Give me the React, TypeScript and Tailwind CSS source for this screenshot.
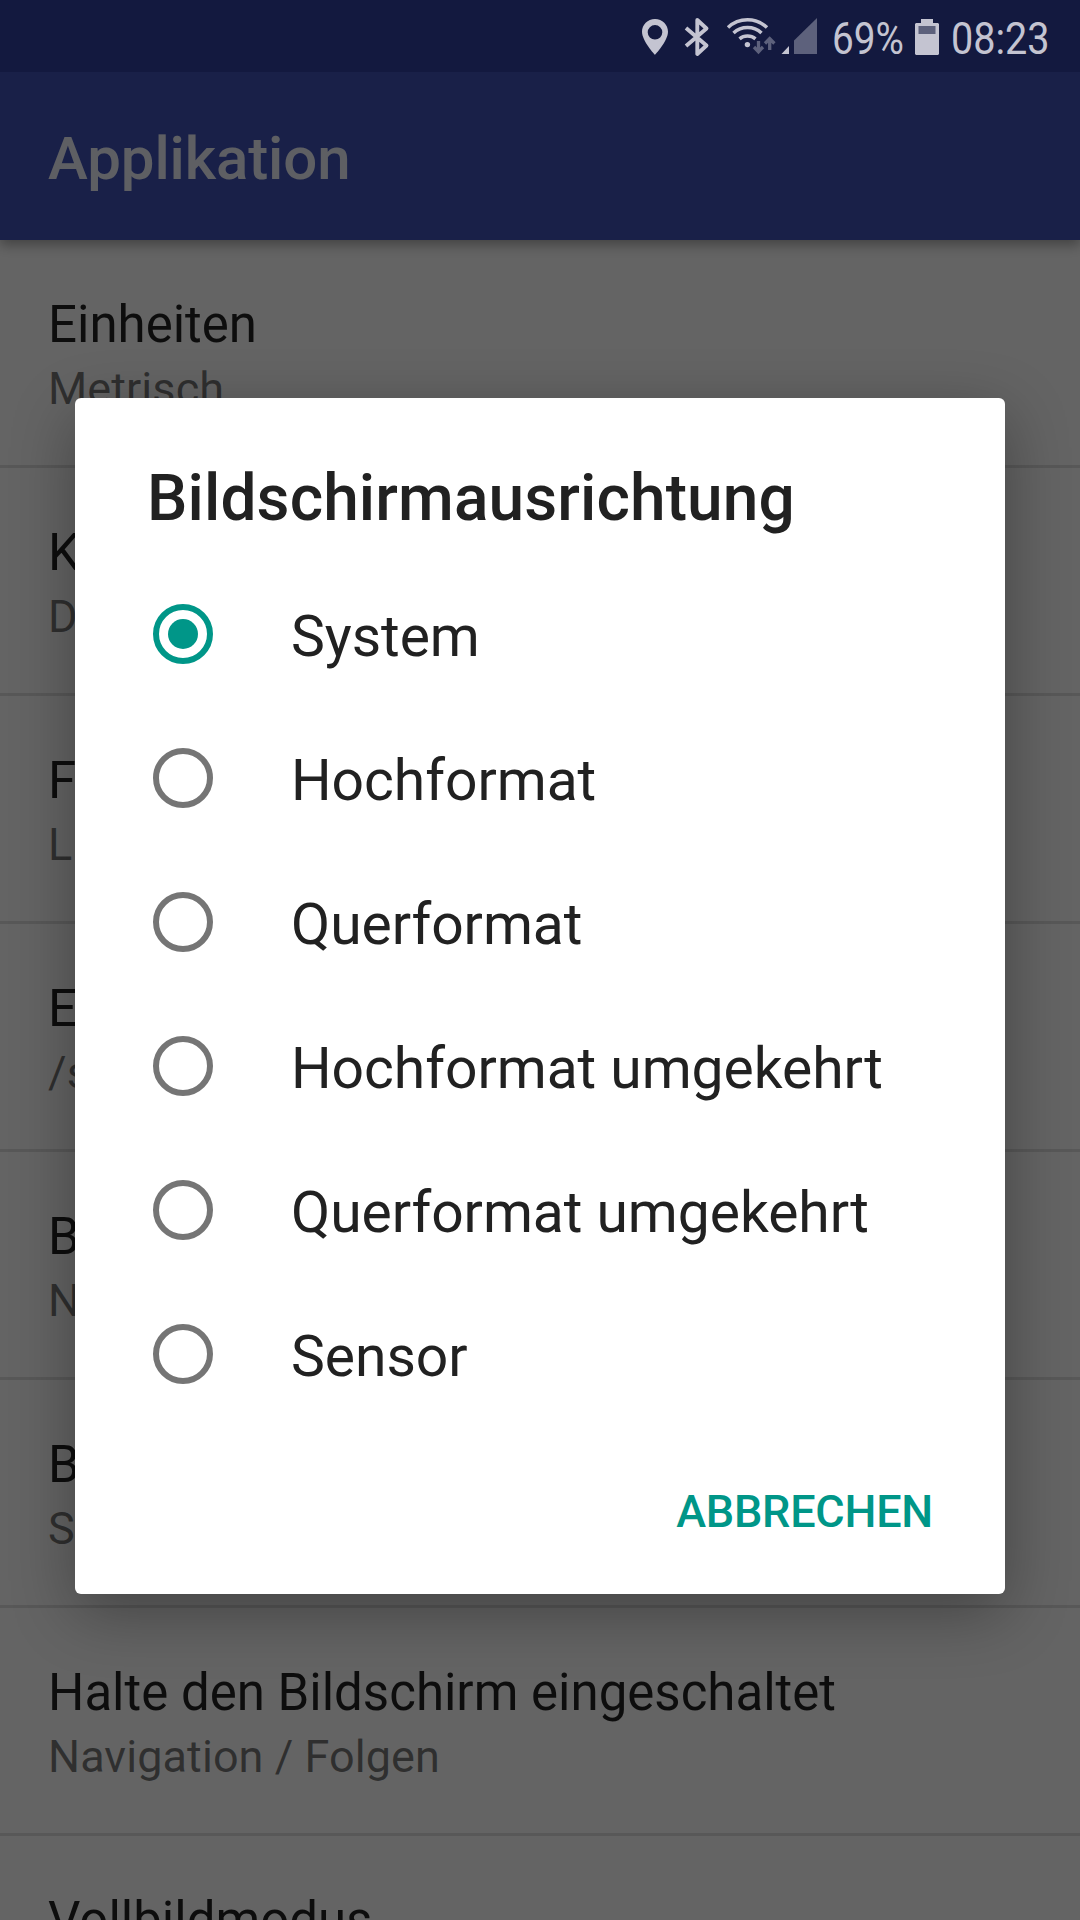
import React, { useState } from "react"

interface Preference {
	title: string
	summary?: string
}

const preferences: Preference[] = [
	{ title: "Einheiten", summary: "Metrisch" },
	{ title: "K", summary: "D" },
	{ title: "F", summary: "L" },
	{ title: "E", summary: "/s" },
	{ title: "B", summary: "N" },
	{ title: "B", summary: "S" },
	{ title: "Halte den Bildschirm eingeschaltet", summary: "Navigation / Folgen" },
	{ title: "Vollbildmodus" },
]

const orientations = [
	"System",
	"Hochformat",
	"Querformat",
	"Hochformat umgekehrt",
	"Querformat umgekehrt",
	"Sensor",
]

const StatusIcons: React.FC = () => (
	<svg className="h-[72px] w-[180px] shrink-0" viewBox="640 0 180 72" fill="none">
		{/* location */}
		<path
			fill="#c4c4d1"
			fillRule="evenodd"
			d="M655 19c-7.4 0-13 5.700-13 12.800 0 9.200 13 23.200 13 23.200s13-14 13-23.200c0-7.100-5.600-12.800-13-12.800zm0 6a7.300 7.300 0 1 1 0 14.600a7.300 7.300 0 1 1 0-14.600z"
		/>
		{/* bluetooth */}
		<path
			stroke="#c4c4d1"
			strokeWidth="3.900"
			strokeLinejoin="round"
			d="M686 28l20.500 17.500-9.200 8.500V20l9.200 8.500L686 46"
		/>
		{/* wifi */}
		<g stroke="#c4c4d1" strokeWidth="3.500">
			<path d="M728 27.500a28.500 28.500 0 0 1 39 0" />
			<path d="M733.500 33a20.500 20.500 0 0 1 28 0" />
			<path d="M739.500 38.800a12.500 12.500 0 0 1 16 0" />
		</g>
		<circle cx="747.400" cy="44.600" r="2.700" fill="#c4c4d1" />
		<g stroke="#5d617c" strokeWidth="3.300">
			<path d="M758.500 41v11M754 47l4.500 4.800 4.500-4.800" />
			<path d="M769.700 50V39M765 43.500l4.700-4.800 4.700 4.800" />
		</g>
		{/* mobile signal */}
		<path fill="#c4c4d1" d="M781.500 54l7.500-8v8z" />
		<path fill="#5d617c" d="M794 54V40.500L817 18v36z" />
	</svg>
)

const BatteryIcon: React.FC = () => (
	<svg className="h-9 w-6 shrink-0" viewBox="0 0 24 36">
		<path fill="#c4c4d1" d="M6 0h12v4h5l1 1v30l-1 1H1l-1-1V5l1-1h5z" />
		<path fill="#5d617c" d="M3.500 7h17v8h-17z" />
	</svg>
)

interface RadioRowProps {
	label: string
	checked: boolean
	onSelect: () => void
}

const RadioRow: React.FC<RadioRowProps> = ({ label, checked, onSelect }: RadioRowProps) => {
	return (
		<button role="radio" aria-checked={checked} className="flex h-36 items-center pl-[78px] text-left" onClick={onSelect}>
			<span
				className={
					checked
						? "flex size-[60px] items-center justify-center rounded-full border-6 border-[#009688]"
						: "flex size-[60px] items-center justify-center rounded-full border-6 border-[#757575]"
				}
			>
				{checked && <span className="size-[30px] rounded-full bg-[#009688]" />}
			</span>
			<span className="ml-[78px] pt-1.5 text-[57px] leading-[68px] tracking-[-0.05px] whitespace-nowrap text-[#212121]">
				{label}
			</span>
		</button>
	)
}

export default function App() {
	const [selected, setSelected] = useState<string>("System")

	return (
		<div className="relative h-[1920px] w-[1080px] overflow-hidden bg-[#fafafa] font-[Roboto,sans-serif]">
			<div className="relative z-10 h-[72px] bg-[#303f9f]" />
			<header className="relative flex h-[168px] items-center bg-[#3f51b5] pl-12 shadow-[0_5px_12px_rgba(0,0,0,0.34)]">
				<h1 className="pt-[5px] text-[60px] leading-[70px] font-medium tracking-[-0.1px] text-white/90">Applikation</h1>
			</header>
			<ul>
				{preferences.map(({ title, summary }, index) => (
					<li key={index} className="h-[228px] border-b-3 border-black/12 pt-[55px] pl-12 whitespace-nowrap">
						<div className="text-[51px] leading-[60px] text-black/87">{title}</div>
						<div className="pt-1 text-[45px] leading-[60px] tracking-[0.06px] text-black/54">{summary}</div>
					</li>
				))}
			</ul>

			<div className="absolute inset-0 z-20 flex flex-col bg-black/60">
				<div className="flex h-[72px] shrink-0 items-center justify-end pr-[30px] text-[45px] text-[#c4c4d1]">
					<StatusIcons />
					<span className="ml-[12px] w-[74px] pt-[6px]">
						<span className="block origin-left scale-x-[0.86]">69%</span>
					</span>
					<span className="ml-[9px] flex pt-[2px]">
						<BatteryIcon />
					</span>
					<span className="ml-[12px] w-[99px] pt-[6px]">
						<span className="block origin-left scale-x-[0.88]">08:23</span>
					</span>
				</div>

				<div
					role="dialog"
					className="mx-[75px] mt-[326px] flex h-[1196px] flex-col rounded-md bg-white shadow-[0_18px_64px_rgba(0,0,0,0.33)]"
				>
					<h2 className="pt-[64px] pl-[72px] text-[64px] leading-[74px] font-medium tracking-[0.12px] text-[#212121]">
						Bildschirmausrichtung
					</h2>
					<div role="radiogroup" className="mt-[26px] flex flex-col">
						{orientations.map((label) => (
							<RadioRow
								key={label}
								label={label}
								checked={label === selected}
								onSelect={() => setSelected(label)}
							/>
						))}
					</div>
					<div className="mt-[56px] flex justify-end pr-[72px]">
						<button className="text-[45px] leading-[60px] font-medium tracking-[-0.25px] text-[#009688]">ABBRECHEN</button>
					</div>
				</div>
			</div>
		</div>
	)
}
